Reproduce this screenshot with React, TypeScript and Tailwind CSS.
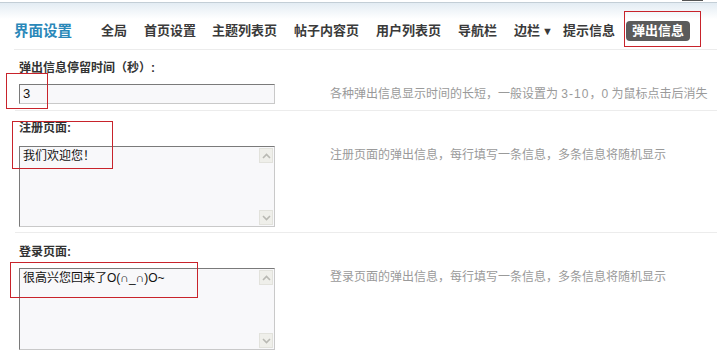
import React from 'react';

const font = { fontFamily: '"Liberation Sans", "Noto Sans CJK SC", sans-serif' };

const navItems = [
  { label: '全局', cls: 'ml-[29px]' },
  { label: '首页设置', cls: 'ml-[17px]' },
  { label: '主题列表页', cls: 'ml-[16px]' },
  { label: '帖子内容页', cls: 'ml-[17px]' },
  { label: '用户列表页', cls: 'ml-[17px]' },
  { label: '导航栏', cls: 'ml-[17px]' },
];

const Chevron: React.FC<{ up?: boolean }> = ({ up }) => (
  <svg width="9" height="6" viewBox="0 0 9 6">
    <path
      d={up ? 'M1 5 L4.5 1.5 L8 5' : 'M1 1 L4.5 4.5 L8 1'}
      fill="none"
      stroke="#b9b9b3"
      strokeWidth="1.6"
    />
  </svg>
);

// 仿旧式文本框（带上下滚动按钮）
const FakeTextarea: React.FC<{ text: string; height: string }> = ({ text, height }) => (
  <div
    className={`w-[256px] ${height} flex border border-t-[#7a7a7a] border-l-[#7a7a7a] border-r-[#c9c9c9] border-b-[#c9c9c9] bg-[#f8f8fa]`}
  >
    <div className="flex-1 pl-[3px] pt-[1px] text-[12px] leading-[16px] text-[#111]">{text}</div>
    <div className="w-[15px] flex flex-col justify-between py-[1px] pr-[1px]">
      <div className="h-[15px] flex items-center justify-center bg-[#efefea] border border-[#e2e2dc]">
        <Chevron up />
      </div>
      <div className="h-[15px] flex items-center justify-center bg-[#efefea] border border-[#e2e2dc]">
        <Chevron />
      </div>
    </div>
  </div>
);

const Hint: React.FC<{ children: React.ReactNode }> = ({ children }) => (
  <div className="ml-[55px] text-[12px] leading-[16px] text-[#9a9a9a] whitespace-nowrap">{children}</div>
);

export default function App() {
  return (
    <div className="relative w-[717px] h-[354px] overflow-hidden bg-white" style={font}>
      {/* 顶部标题栏 */}
      <div className="h-[2px]" />
      <div className="border-t border-[#c3ced6] bg-[linear-gradient(to_bottom,#e3ecf3,#ffffff_16px)]">
        <div className="ml-[14px] h-[47px] flex items-end pb-[8px] border-b border-[#ececec]">
          <span className="text-[14.5px] leading-[20px] font-bold text-[#2a88b9]">界面设置</span>
          {navItems.map((n) => (
            <span key={n.label} className={`${n.cls} text-[13px] leading-[20px] font-bold text-[#3a3a3a]`}>
              {n.label}
            </span>
          ))}
          <span className="ml-[17px] text-[13px] leading-[20px] font-bold text-[#3a3a3a] flex items-center">
            边栏<span className="ml-[2px] text-[11px]">▼</span>
          </span>
          <span className="ml-[10px] text-[13px] leading-[20px] font-bold text-[#3a3a3a]">提示信息</span>
          <span className="ml-[11px] h-[20px] px-[6px] rounded-[4px] bg-[#5b5b5b] text-[13px] leading-[20px] font-bold text-white">
            弹出信息
          </span>
        </div>
      </div>

      <div className="ml-[15px]">
        {/* 停留时间 */}
        <div className="pl-[4px] pt-[10px] pb-[6px] border-b border-[#ececec]">
          <div className="text-[12px] leading-[16px] font-bold text-[#333]">弹出信息停留时间（秒）:</div>
          <div className="mt-[8px] flex items-center">
            <div className="w-[256px] h-[20px] flex items-center pl-[3px] border border-t-[#7a7a7a] border-l-[#7a7a7a] border-r-[#c9c9c9] border-b-[#c9c9c9] bg-[#f8f8fa] text-[13px] text-[#111]">
              3
            </div>
            <Hint>
              各种弹出信息显示时间的长短，一般设置为 <span className="tracking-[1px]">3-10</span>，0 为鼠标点击后消失
            </Hint>
          </div>
        </div>

        {/* 注册页面 */}
        <div className="pl-[4px] pt-[9px] pb-[5px] border-b border-[#ececec]">
          <div className="text-[12px] leading-[16px] font-bold text-[#333]">注册页面:</div>
          <div className="mt-[10px] flex items-start">
            <FakeTextarea text="我们欢迎您！" height="h-[81px]" />
            <div className="mt-[1px]">
              <Hint>注册页面的弹出信息，每行填写一条信息，多条信息将随机显示</Hint>
            </div>
          </div>
        </div>

        {/* 登录页面 */}
        <div className="pl-[4px] pt-[11px]">
          <div className="text-[12px] leading-[16px] font-bold text-[#333]">登录页面:</div>
          <div className="mt-[8px] flex items-start">
            <FakeTextarea text="很高兴您回来了O(∩_∩)O~" height="h-[82px]" />
            <div className="mt-[1px]">
              <Hint>登录页面的弹出信息，每行填写一条信息，多条信息将随机显示</Hint>
            </div>
          </div>
        </div>
      </div>

      {/* 红色标注框 */}
      <div className="absolute left-[682px] top-0 w-[21px] h-[1px] bg-[#555]" />
      <div className="absolute left-[624px] top-[11px] w-[77px] h-[36px] border border-[#c8232b]" />
      <div className="absolute left-[6px] top-[73px] w-[42px] h-[36px] border border-[#c8232b]" />
      <div className="absolute left-[12px] top-[121px] w-[101px] h-[48px] border border-[#c8232b]" />
      <div className="absolute left-[10px] top-[262px] w-[188px] h-[36px] border border-[#c8232b]" />
    </div>
  );
}
